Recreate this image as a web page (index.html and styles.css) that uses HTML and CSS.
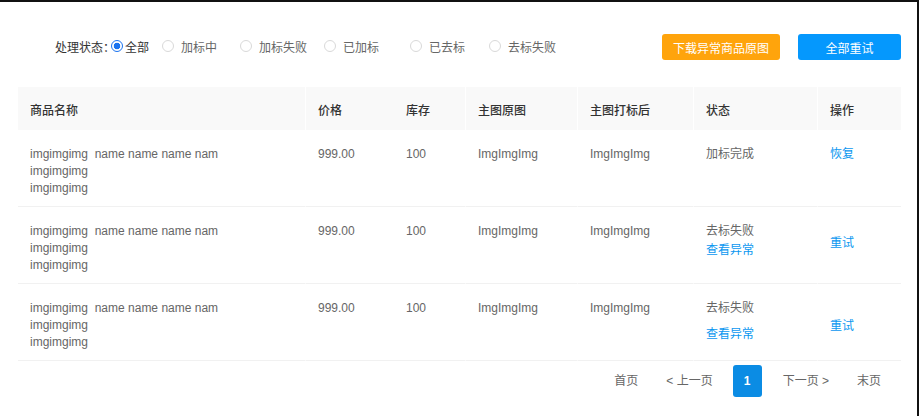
FILE: index.html
```html
<!DOCTYPE html>
<html lang="zh-CN">
<head>
<meta charset="utf-8">
<title>商品打标</title>
<link rel="stylesheet" href="styles.css">
</head>
<body>
<div class="page">
  <div class="toolbar">
    <div class="filter">
      <span class="filter-label">处理状态：</span>
      <label class="opt opt-1"><span class="radio checked"></span><span>全部</span></label>
      <label class="opt opt-2"><span class="radio"></span><span>加标中</span></label>
      <label class="opt opt-3"><span class="radio"></span><span>加标失败</span></label>
      <label class="opt opt-4"><span class="radio"></span><span>已加标</span></label>
      <label class="opt opt-5"><span class="radio"></span><span>已去标</span></label>
      <label class="opt opt-6"><span class="radio"></span><span>去标失败</span></label>
    </div>
    <div class="actions">
      <button class="btn btn-orange">下载异常商品原图</button>
      <button class="btn btn-blue">全部重试</button>
    </div>
  </div>

  <table class="grid">
    <colgroup>
      <col class="c1"><col class="c2"><col class="c3"><col class="c4"><col class="c5"><col class="c6"><col class="c7">
    </colgroup>
    <thead>
      <tr class="head">
        <th>商品名称</th>
        <th class="div">价格</th>
        <th>库存</th>
        <th class="div">主图原图</th>
        <th class="div">主图打标后</th>
        <th class="div">状态</th>
        <th class="div">操作</th>
      </tr>
    </thead>
    <tbody>
      <tr class="row">
        <td>imgimgimg&nbsp; name name name nam<br>imgimgimg<br>imgimgimg</td>
        <td class="div">999.00</td>
        <td>100</td>
        <td class="div">ImgImgImg</td>
        <td class="div">ImgImgImg</td>
        <td class="div">加标完成</td>
        <td class="div"><a class="link">恢复</a></td>
      </tr>
      <tr class="row">
        <td>imgimgimg&nbsp; name name name nam<br>imgimgimg<br>imgimgimg</td>
        <td class="div">999.00</td>
        <td>100</td>
        <td class="div">ImgImgImg</td>
        <td class="div">ImgImgImg</td>
        <td class="div"><div>去标失败</div><div class="link sub sub-a">查看异常</div></td>
        <td class="div"><div class="link act act-a">重试</div></td>
      </tr>
      <tr class="row">
        <td>imgimgimg&nbsp; name name name nam<br>imgimgimg<br>imgimgimg</td>
        <td class="div">999.00</td>
        <td>100</td>
        <td class="div">ImgImgImg</td>
        <td class="div">ImgImgImg</td>
        <td class="div"><div>去标失败</div><div class="link sub sub-b">查看异常</div></td>
        <td class="div"><div class="link act act-b">重试</div></td>
      </tr>
    </tbody>
  </table>

  <div class="pager">
    <span class="pg">首页</span>
    <span class="pg">&lt; 上一页</span>
    <span class="pg-active">1</span>
    <span class="pg">下一页 &gt;</span>
    <span class="pg">末页</span>
  </div>
</div>
</body>
</html>
```

FILE: styles.css
```css
html, body {
  margin: 0;
  padding: 0;
  background: #fff;
}

body {
  font-family: "Liberation Sans", "Noto Sans CJK SC", sans-serif;
  font-size: 12px;
  color: #666;
}

.page {
  box-sizing: border-box;
  width: 919px;
  height: 416px;
  border-top: 2px solid #111;
  border-right: 2px solid #111;
  padding: 0 16px 0 18px;
  overflow: hidden;
}

.toolbar {
  display: flex;
  align-items: center;
  justify-content: space-between;
  height: 26px;
  margin-top: 32px;
}

.filter {
  display: flex;
  align-items: center;
  padding-left: 37px;
  margin-top: -2px;
}

.filter-label {
  width: 56px;
  white-space: nowrap;
  color: #333;
}

.opt {
  display: flex;
  align-items: center;
  gap: 7px;
  color: #666;
  white-space: nowrap;
}

.opt-1 { width: 51px; gap: 2px; color: #333; }
.opt-2 { width: 78px; }
.opt-3 { width: 84px; }
.opt-4 { width: 86px; }
.opt-5 { width: 79px; }

.radio {
  box-sizing: border-box;
  width: 12px;
  height: 12px;
  border: 1px solid #d9d9d9;
  border-radius: 50%;
  background: #fff;
  flex: none;
}

.radio.checked {
  border-color: #1a73f0;
  background: radial-gradient(circle, #1a73f0 0 3px, #fff 3.6px);
}

.actions {
  display: flex;
  align-items: center;
}

.btn {
  height: 26px;
  border: 0;
  border-radius: 3px;
  padding: 0;
  color: #fff;
  font: inherit;
  cursor: pointer;
}

.btn-orange {
  width: 118px;
  background: #ffa40c;
}

.btn-blue {
  width: 103px;
  margin-left: 18px;
  background: #0598fd;
}

.grid {
  width: 883px;
  table-layout: fixed;
  border-collapse: separate;
  border-spacing: 0;
  margin-top: 27px;
}

.c1 { width: 287px; }
.c2 { width: 88px; }
.c3 { width: 72px; }
.c4 { width: 112px; }
.c5 { width: 116px; }
.c6 { width: 124px; }
.c7 { width: 84px; }

.head {
  height: 43px;
}

th {
  background: #f9f9f9;
  color: #333;
  font-weight: 500;
  text-align: left;
  padding: 2px 0 0 12px;
  vertical-align: middle;
}

.row {
  height: 77px;
}

td {
  vertical-align: top;
  padding: 16px 0 0 12px;
  line-height: 17px;
  border-bottom: 1px solid #f1f1f1;
  color: #666;
  white-space: nowrap;
}

th + th, td + td {
  padding-left: 13px;
}

th.div, td.div {
  padding-left: 12px;
  border-left: 1px solid #fff;
}

.link {
  color: #0b97f0;
  cursor: pointer;
}

.sub-a { margin-top: 2px; }
.sub-b { margin-top: 9px; }
.act-a { margin-top: 12px; }
.act-b { margin-top: 18px; }

.pager {
  display: flex;
  justify-content: flex-end;
  align-items: center;
  margin-top: 4px;
  padding-right: 6px;
}

.pg {
  padding: 0 14px;
  line-height: 32px;
  color: #666;
}

.pg-active {
  width: 29px;
  height: 32px;
  line-height: 32px;
  margin: 0 7px 0 6px;
  border-radius: 3px;
  background: #0b8ce4;
  color: #fff;
  font-weight: 700;
  text-align: center;
}
```
